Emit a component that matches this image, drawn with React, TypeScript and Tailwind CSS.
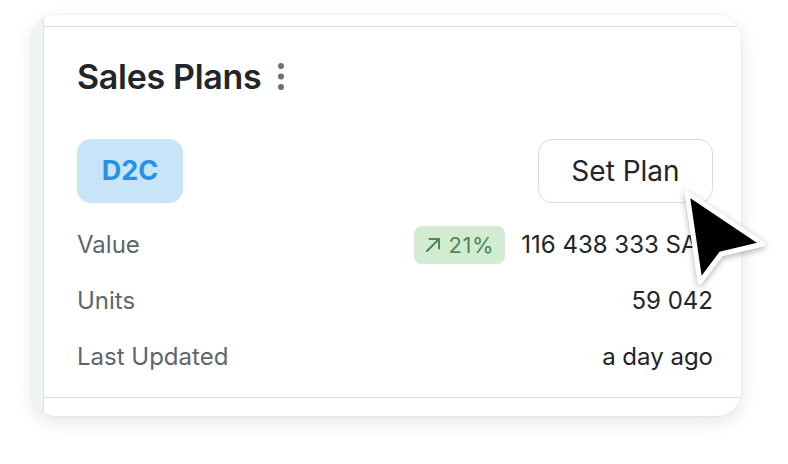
import React from 'react';

const rows = [
  { label: 'Value', value: '116 438 333 SAR', delta: '21%' },
  { label: 'Units', value: '59 042' },
  { label: 'Last Updated', value: 'a day ago' },
];

function Cursor() {
  return (
    <svg
      className="pointer-events-none absolute left-[670px] top-[180px] h-[115px] w-[110px] drop-shadow-[0_2px_3px_rgba(0,0,0,0.3)]"
      viewBox="670 180 110 115"
    >
      <path
        d="M687 193 L763 244 L721 254 L700 282 Z"
        fill="#000"
        stroke="#fff"
        strokeWidth="5"
        strokeLinejoin="round"
      />
    </svg>
  );
}

export default function App() {
  return (
    <div className="relative h-[464px] w-[788px] bg-white font-['Inter',sans-serif]">
      <div className="absolute left-[32px] top-[15px] flex h-[401px] w-[709px] overflow-hidden rounded-[24px] bg-white shadow-[0_6px_18px_rgba(0,0,0,0.10),0_0_3px_rgba(0,0,0,0.06)]">
        {/* left strip */}
        <div className="w-[12px] shrink-0 border-r border-[#dcdfe2] bg-[#eef3f5]" />

        <div className="flex flex-1 flex-col pb-[18px] pt-[11px]">
          <div className="flex flex-1 flex-col border-y border-[#dcdfe2] pl-[33px] pr-[28px]">
            {/* header */}
            <div className="mt-[28px] flex h-[42px] items-center gap-[16px]">
              <h2 className="text-[34px] font-semibold tracking-[-0.3px] text-[#222529]">Sales Plans</h2>
              <svg width="8" height="30" viewBox="0 0 8 30" className="mt-[2px]">
                <circle cx="4" cy="4" r="3" fill="#6d6f72" />
                <circle cx="4" cy="14.5" r="3" fill="#6d6f72" />
                <circle cx="4" cy="25" r="3" fill="#6d6f72" />
              </svg>
            </div>

            {/* badge + button */}
            <div className="mt-[42px] flex items-center justify-between">
              <span className="flex h-[64px] w-[106px] items-center justify-center rounded-[14px] bg-[#c8e4f8] text-[27px] font-bold text-[#2690e6]">
                D2C
              </span>
              <button
                type="button"
                className="flex h-[64px] w-[175px] items-center justify-center rounded-[14px] border-[1.5px] border-[#dadde0] bg-white text-[28px] text-[#222529]"
              >
                Set Plan
              </button>
            </div>

            {/* rows */}
            <div className="mt-[14px] flex flex-col">
              {rows.map((r) => (
                <div key={r.label} className="flex h-[56px] items-center justify-between">
                  <span className="text-[24px] text-[#5d666d]">{r.label}</span>
                  <div className="flex items-center gap-[16px]">
                    {r.delta && (
                      <span className="flex h-[38px] items-center gap-[8px] rounded-[8px] bg-[#d3ebd2] pl-[11px] pr-[11px] text-[22px] tracking-[0.6px] text-[#4b8a4b]">
                        <svg width="16" height="16" viewBox="0 0 16 16" fill="none" stroke="currentColor" strokeWidth="2" strokeLinecap="round" strokeLinejoin="round">
                          <path d="M2 14 L14 2" />
                          <path d="M4.5 2 H14 V11.5" />
                        </svg>
                        {r.delta}
                      </span>
                    )}
                    <span className="text-[24px] text-[#222529]">{r.value}</span>
                  </div>
                </div>
              ))}
            </div>
          </div>
        </div>
      </div>
      <Cursor />
    </div>
  );
}
